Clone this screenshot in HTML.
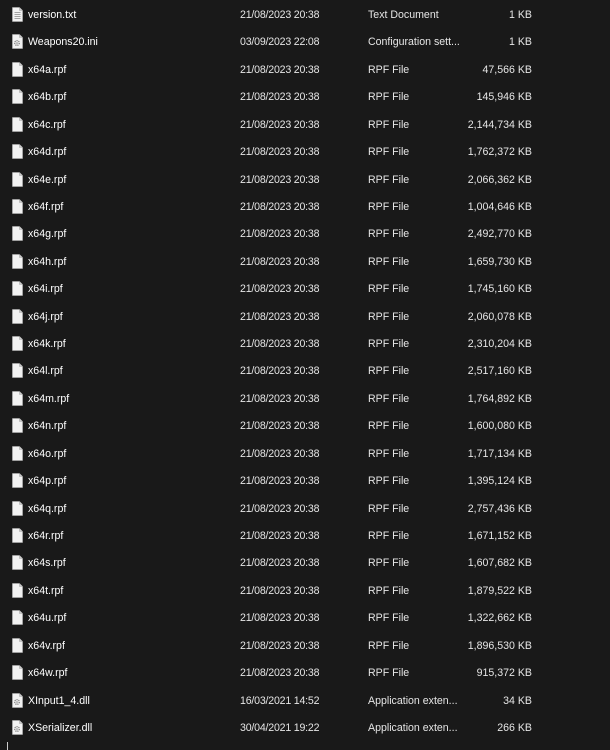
<!DOCTYPE html>
<html><head><meta charset="utf-8"><style>
html,body{margin:0;padding:0;background:#191919;width:610px;height:750px;overflow:hidden}
body{position:relative;font-family:"Liberation Sans",sans-serif;font-size:10.6px;color:#fff}
.r{position:absolute;left:0;width:610px;height:16px;line-height:16px}
.n{position:absolute;left:28px;color:#fff}
.d{position:absolute;left:240px;color:#e6e6e6;letter-spacing:-0.2px}
.t{position:absolute;left:368px;color:#e6e6e6}
.s{position:absolute;right:78px;color:#e6e6e6}
.i{position:absolute;left:12px;top:0px;width:11px;height:15px}
</style></head><body>
<div id="c"></div>
<script>
var rows=[
["version.txt","21/08/2023 20:38","Text Document","1 KB","txt"],
["Weapons20.ini","03/09/2023 22:08","Configuration sett...","1 KB","ini"],
["x64a.rpf","","","47,566 KB"],
["x64b.rpf","","","145,946 KB"],
["x64c.rpf","","","2,144,734 KB"],
["x64d.rpf","","","1,762,372 KB"],
["x64e.rpf","","","2,066,362 KB"],
["x64f.rpf","","","1,004,646 KB"],
["x64g.rpf","","","2,492,770 KB"],
["x64h.rpf","","","1,659,730 KB"],
["x64i.rpf","","","1,745,160 KB"],
["x64j.rpf","","","2,060,078 KB"],
["x64k.rpf","","","2,310,204 KB"],
["x64l.rpf","","","2,517,160 KB"],
["x64m.rpf","","","1,764,892 KB"],
["x64n.rpf","","","1,600,080 KB"],
["x64o.rpf","","","1,717,134 KB"],
["x64p.rpf","","","1,395,124 KB"],
["x64q.rpf","","","2,757,436 KB"],
["x64r.rpf","","","1,671,152 KB"],
["x64s.rpf","","","1,607,682 KB"],
["x64t.rpf","","","1,879,522 KB"],
["x64u.rpf","","","1,322,662 KB"],
["x64v.rpf","","","1,896,530 KB"],
["x64w.rpf","","","915,372 KB"],
["XInput1_4.dll","16/03/2021 14:52","Application exten...","34 KB","dll"],
["XSerializer.dll","30/04/2021 19:22","Application exten...","266 KB","dll"]];
var h="";
rows.forEach(function(r,k){
 var top=Math.round(14+k*27.42-7);
 var d=r[1]||"21/08/2023 20:38", t=r[2]||"RPF File", ty=r[4]||"rpf";
 var svg='<svg class="i" viewBox="0 0 11 15"><path d="M0.5 0.5H7.5L10.5 3.5V14.5H0.5Z" fill="#f2f2f2" stroke="#bbb" stroke-width="0.6"/><path d="M7.5 0.5V3.5H10.5" fill="#ccc" stroke="#aaa" stroke-width="0.6"/>';
 if(ty=="txt")svg+='<path d="M2.5 5.5H8.5M2.5 7.5H8.5M2.5 9.5H8.5M2.5 11.5H8.5" stroke="#888" stroke-width="0.8"/>';
 if(ty=="ini"||ty=="dll")svg+='<circle cx="5" cy="9" r="2.3" fill="none" stroke="#888" stroke-width="1.4" stroke-dasharray="1.2 0.8"/><circle cx="5" cy="9" r="0.8" fill="#888"/>';
 svg+='</svg>';
 h+='<div class="r" style="top:'+top+'px">'+svg+'<span class="n">'+r[0]+'</span><span class="d">'+d+'</span><span class="t">'+t+'</span><span class="s">'+r[3]+'</span></div>';
});
document.getElementById("c").innerHTML=h;
</script>
<div style="position:absolute;left:7px;top:742px;width:1px;height:8px;background:#ccc"></div>
</body></html>
